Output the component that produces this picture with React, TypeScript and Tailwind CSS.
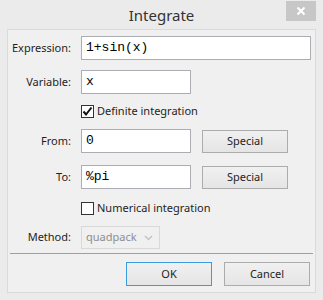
import React from "react";

const font = { fontFamily: '"Noto Sans", "Open Sans", sans-serif' };
const mono = { fontFamily: '"Liberation Mono", "DejaVu Sans Mono", monospace' };

function Label({ text }: { text: string }) {
  return (
    <div className="w-[63px] text-right text-[11px] text-[#1e1e1e]" style={font}>
      {text}
    </div>
  );
}

function TextBox({ value, width }: { value: string; width: string }) {
  return (
    <div
      className={`ml-[10px] h-[24px] ${width} border border-[#abadb3] bg-white flex items-center pl-[4px] text-[13px] text-black`}
      style={mono}
    >
      {value}
    </div>
  );
}

function Button({ text, className = "" }: { text: string; className?: string }) {
  return (
    <div
      className={`flex items-center justify-center border bg-gradient-to-b from-[#f0f0f0] to-[#e5e5e5] text-[11px] text-[#1e1e1e] ${className}`}
      style={font}
    >
      {text}
    </div>
  );
}

function Check({ checked, text }: { checked: boolean; text: string }) {
  return (
    <div className="flex items-center h-[13px] ml-[73px]">
      <div className="w-[13px] h-[13px] border border-[#333333] bg-white flex items-center justify-center">
        {checked && (
          <svg width="11" height="11" viewBox="0 0 11 11">
            <path d="M1.5 5.5 L4 8.5 L9.5 1.5" fill="none" stroke="#111" strokeWidth="2" />
          </svg>
        )}
      </div>
      <span className="ml-[3px] text-[11px] text-[#1e1e1e]" style={font}>
        {text}
      </span>
    </div>
  );
}

export default function App() {
  return (
    <div className="w-[323px] h-[300px] bg-[#ebebeb] flex flex-col">
      {/* title bar */}
      <div className="relative h-[29px] flex items-center justify-center">
        <span className="text-[15px] text-[#333333] mt-[1px]" style={font}>
          Integrate
        </span>
        <div className="absolute left-[286px] top-[1px] w-[30px] h-[20px] bg-[#c7c7c7] flex items-center justify-center">
          <svg width="10" height="10" viewBox="0 0 10 10">
            <path d="M1.5 1.5 L8.5 8.5 M8.5 1.5 L1.5 8.5" stroke="#fff" strokeWidth="2" />
          </svg>
        </div>
      </div>

      {/* content panel */}
      <div className="mx-[7px] mb-[7px] flex-1 border border-[#dadada] bg-[#f0f0f0] flex flex-col">
        <div className="mt-[6px] flex items-center h-[24px]">
          <Label text="Expression:" />
          <TextBox value="1+sin(x)" width="w-[230px]" />
        </div>

        <div className="mt-[10px] flex items-center h-[24px]">
          <Label text="Variable:" />
          <TextBox value="x" width="w-[110px]" />
        </div>

        <div className="mt-[11px]">
          <Check checked text="Definite integration" />
        </div>

        <div className="mt-[11px] flex items-center h-[24px]">
          <Label text="From:" />
          <TextBox value="0" width="w-[110px]" />
          <Button text="Special" className="ml-[11px] w-[86px] h-[23px] border-[#acacac]" />
        </div>

        <div className="mt-[12px] flex items-center h-[24px]">
          <Label text="To:" />
          <TextBox value="%pi" width="w-[110px]" />
          <Button text="Special" className="ml-[11px] w-[86px] h-[23px] border-[#acacac]" />
        </div>

        <div className="mt-[13px]">
          <Check checked={false} text="Numerical integration" />
        </div>

        <div className="mt-[11px] flex items-center h-[23px]">
          <Label text="Method:" />
          <div className="ml-[10px] w-[79px] h-[23px] border border-[#d9d9d9] bg-[#f0f0f0] flex items-center justify-between pl-[4px] pr-[6px]">
            <span className="text-[11px] text-[#8d8d8d]" style={font}>
              quadpack
            </span>
            <svg width="9" height="6" viewBox="0 0 9 6">
              <path d="M1 1 L4.5 4.5 L8 1" fill="none" stroke="#c4c4c4" strokeWidth="1.5" />
            </svg>
          </div>
        </div>

        <div className="mt-[4px] mx-[2px] h-px bg-[#a0a0a0]" />

        <div className="mt-[8px] flex justify-end gap-[12px] pr-[5px]">
          <Button text="OK" className="w-[86px] h-[24px] border-[#3c9be0]" />
          <Button text="Cancel" className="w-[86px] h-[24px] border-[#acacac]" />
        </div>
      </div>
    </div>
  );
}
